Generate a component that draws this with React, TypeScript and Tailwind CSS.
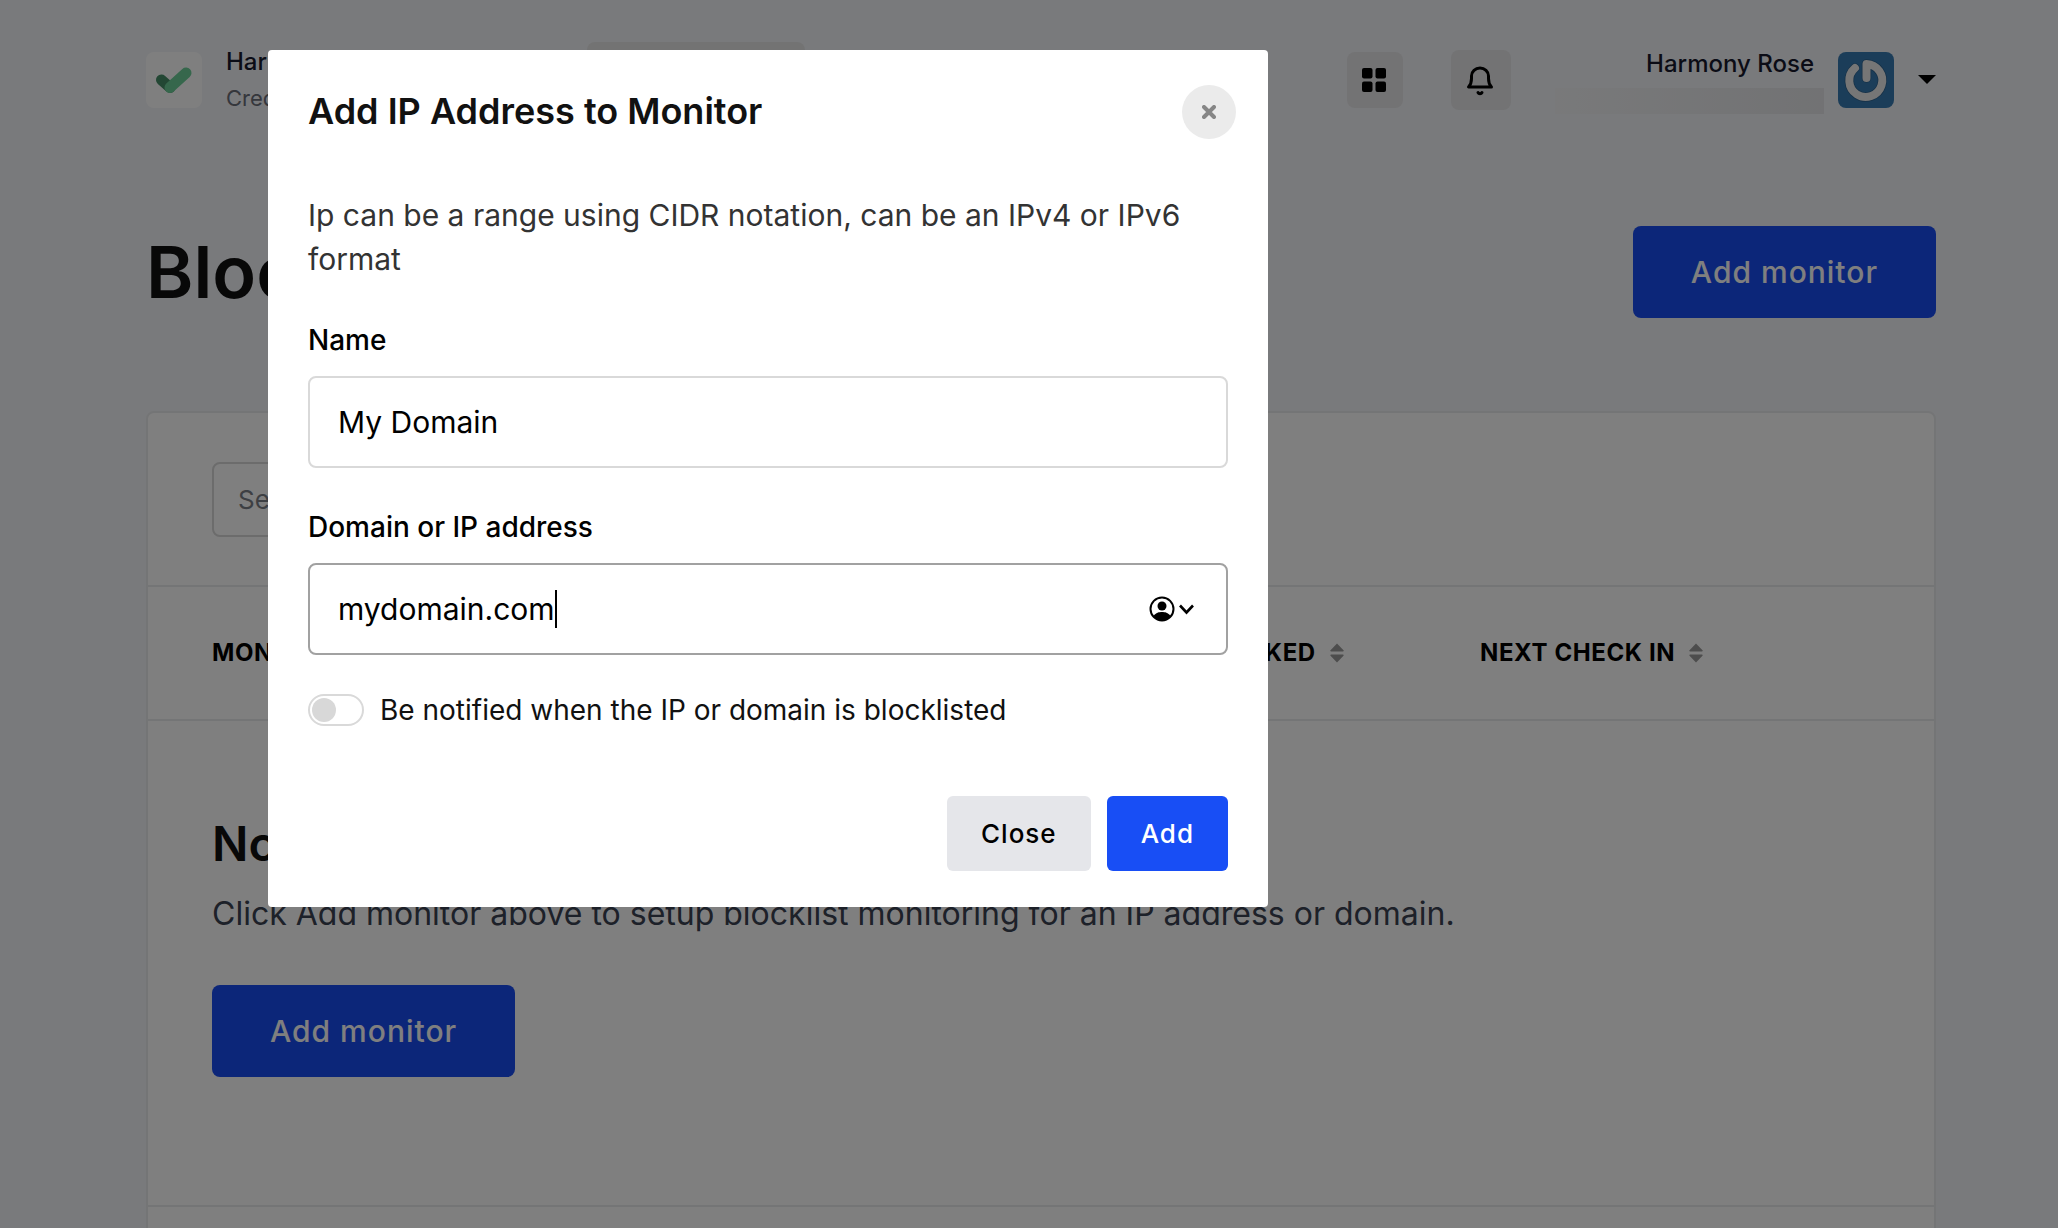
import React from "react";

function SortIcon() {
  return (
    <svg width="14" height="20" viewBox="0 0 14 20" fill="#9b9b9b" aria-hidden="true">
      <path d="M7 0.5 13.5 7.2Q14 8.5 12.8 8.5H1.2Q0 8.5 0.5 7.2Z" />
      <path d="M7 19.5 13.5 12.8Q14 11.5 12.8 11.5H1.2Q0 11.5 0.5 12.8Z" />
    </svg>
  );
}

function HeaderCell({ label, className }: { label: string; className: string }) {
  return (
    <th scope="col" className={`${className} h-[133px] pl-16 text-left text-2xl font-bold tracking-wide text-black`}>
      <span className="flex items-center gap-[14px] whitespace-nowrap">
        {label}
        <SortIcon />
      </span>
    </th>
  );
}

function AddMonitorButton() {
  return (
    <button type="button" className="h-[92px] rounded-lg bg-[#184cf2] px-[58px] text-[30px] font-medium tracking-[1px] text-white">
      Add monitor
    </button>
  );
}

function TopBar() {
  return (
    <header className="flex h-[60px] items-center">
      <div className="h-14 w-14 rounded-lg bg-white">
        <svg width="56" height="56" viewBox="0 0 56 56" fill="none" strokeLinecap="round" strokeLinejoin="round" aria-hidden="true">
          <path d="M15.500 28 24 35.500" stroke="#468f68" strokeWidth="11" />
          <path d="M24 35.500 40 21" stroke="#6ccf98" strokeWidth="11" />
        </svg>
      </div>
      <div className="ml-6 w-[361px] whitespace-nowrap">
        <p className="text-2xl font-medium text-[#16182c]">Harmony Rose</p>
        <p className="mt-1 text-[22px] leading-8 text-[#6b6e78]">Credits</p>
      </div>
      <div className="h-[76px] w-[218px] rounded-lg bg-[#e6e6e7]" />
      <button type="button" aria-label="Apps" className="ml-auto flex h-14 w-14 items-center justify-center rounded-lg bg-[#e6e6e8]">
        <svg width="26" height="24" viewBox="0 0 26 24" fill="#000" aria-hidden="true">
          <rect width="10.5" height="10.5" rx="2" />
          <rect x="13.5" width="10.5" height="10.5" rx="2" />
          <rect y="13.5" width="10.5" height="10.5" rx="2" />
          <rect x="13.5" y="13.5" width="10.5" height="10.5" rx="2" />
        </svg>
      </button>
      <button type="button" aria-label="Notifications" className="ml-12 h-[60px] w-[60px] rounded-lg bg-[#e6e6e8]">
        <svg width="60" height="60" viewBox="0 0 60 60" fill="none" stroke="#000" strokeWidth="3" strokeLinecap="round" strokeLinejoin="round" aria-hidden="true">
          <path d="M17.500 37H40.500C38.500 35 37.500 32 37.500 28.500V26A8.500 8 0 0 0 20.500 26V28.500C20.500 32 19.500 35 17.500 37Z" />
          <path d="M27 42.500A2.200 2 0 0 0 31 42.500" />
        </svg>
      </button>
      <div className="ml-11 flex w-[269px] flex-col pt-[2px]">
        <p className="pr-[10px] text-right text-2xl font-medium text-[#16182c]">Harmony Rose</p>
        <div className="mt-2 h-[26px] bg-linear-to-r from-[#f2f3f5] to-[#e4e5e8]" />
      </div>
      <button type="button" aria-label="Account menu" className="ml-[14px] flex items-center gap-6">
        <svg width="56" height="56" viewBox="0 0 56 56" fill="none" aria-hidden="true">
          <rect width="56" height="56" rx="8" fill="#377bb2" />
          <path d="M17 16A16.500 16.500 0 1 0 28.500 12V26" stroke="#2c6290" strokeWidth="9.500" strokeLinecap="round" strokeLinejoin="round" />
          <path d="M17 16A16.500 16.500 0 1 0 28.500 12V26" stroke="#ececec" strokeWidth="8" strokeLinecap="round" strokeLinejoin="round" />
        </svg>
        <svg width="18" height="10" viewBox="0 0 18 10" aria-hidden="true">
          <path d="M0 0H18L9 9Z" />
        </svg>
      </button>
    </header>
  );
}

function MonitorCard() {
  return (
    <section className="mt-[93px] rounded-lg border-2 border-[#e9eaec] bg-white">
      <div className="flex h-[174px] items-center border-b-2 border-[#e9eaec] pl-16">
        <input
          type="search"
          aria-label="Search"
          placeholder="Search"
          className="h-[75px] w-[500px] rounded-lg border-2 border-[#d8d8d8] px-6 text-[26px] placeholder:text-[#7b7e87]"
        />
      </div>
      <table className="w-full table-fixed border-collapse">
        <thead>
          <tr className="border-b-2 border-[#e9eaec]">
            <HeaderCell label="MONITOR" className="w-[51%]" />
            <HeaderCell label="LAST CHECKED" className="w-[20%]" />
            <HeaderCell label="NEXT CHECK IN" className="w-[29%]" />
          </tr>
        </thead>
        <tbody>
          <tr className="border-b-2 border-[#e9eaec]">
            <td colSpan={3} className="px-16 pt-[87px] pb-32">
              <h2 className="text-5xl leading-[72px] font-semibold text-[#111]">No monitors</h2>
              <p className="mt-2 text-[32px] leading-[52px] text-[#3b4252]">
                Click Add monitor above to setup blocklist monitoring for an IP address or domain.
              </p>
              <div className="mt-[45px]">
                <AddMonitorButton />
              </div>
            </td>
          </tr>
        </tbody>
      </table>
      <div className="h-24" />
    </section>
  );
}

function Field({ id, label, children }: { id: string; label: string; children: React.ReactNode }) {
  return (
    <div className="mt-[39px]">
      <label htmlFor={id} className="block text-[28px] leading-10 font-medium text-black">
        {label}
      </label>
      {children}
    </div>
  );
}

function AddIpDialog() {
  return (
    <div className="fixed inset-0 bg-black/50 pt-[50px] pl-[268px]">
      <div role="dialog" aria-modal="true" aria-labelledby="dialog-title" className="w-full max-w-[1000px] rounded bg-white px-10 pt-[35px] pb-9">
        <div className="-mr-2 flex items-start justify-between">
          <h2 id="dialog-title" className="text-4xl leading-[52px] font-semibold text-[#111]">
            Add IP Address to Monitor
          </h2>
          <button type="button" aria-label="Close dialog" className="flex h-[54px] w-[54px] items-center justify-center rounded-full bg-[#ebebeb]">
            <svg width="14" height="14" viewBox="0 0 14 14" stroke="#868686" strokeWidth="4" strokeLinecap="round" aria-hidden="true">
              <path d="M2 2 12 12M12 2 2 12" />
            </svg>
          </button>
        </div>
        <p className="mt-[54px] text-[30px] leading-[44px] text-[#333]">
          Ip can be a range using CIDR notation, can be an IPv4 or IPv6 format
        </p>
        <form>
          <Field id="name" label="Name">
            <input
              id="name"
              type="text"
              defaultValue="My Domain"
              className="mt-4 h-[92px] w-full rounded-lg border-2 border-[#d9d9d9] px-7 text-[30px] text-black"
            />
          </Field>
          <Field id="domain" label="Domain or IP address">
            <div className="mt-4 flex h-[92px] items-center rounded-lg border-2 border-[#a1a1a1] pr-8 pl-7">
              <input
                id="domain"
                type="text"
                defaultValue="mydomain.com"
                className="field-sizing-content text-[30px] text-black outline-none"
              />
              <span className="h-[38px] w-[2px] bg-black" />
              <svg className="ml-auto" width="46" height="26" viewBox="0 0 46 26" fill="none" aria-hidden="true">
                <circle cx="14" cy="13" r="11.500" stroke="#000" strokeWidth="2" />
                <circle cx="14" cy="10" r="4.500" fill="#000" />
                <path d="M5.500 20C8 16.500 11 16 14 16S20 16.500 22.500 20C20.500 23 17.500 24.500 14 24.500S7.500 23 5.500 20Z" fill="#000" />
                <path d="M32 9.500 38.500 16.500 45 9.500" stroke="#000" strokeWidth="2.600" />
              </svg>
            </div>
          </Field>
          <label className="mt-[34px] flex items-center gap-4 text-[28px] leading-[42px] text-[#111]">
            <input type="checkbox" role="switch" className="peer sr-only" />
            <span className="flex h-8 w-14 items-center rounded-full border-2 border-[#d9d9d9] bg-white px-[2px] peer-checked:justify-end">
              <span className="h-6 w-6 rounded-full bg-[#d8d8d8]" />
            </span>
            Be notified when the IP or domain is blocklisted
          </label>
          <div className="mt-[65px] flex justify-end gap-4">
            <button type="button" className="h-[75px] rounded-md bg-[#e5e6ea] px-[34px] text-[26px] font-medium tracking-[1px] text-black">
              Close
            </button>
            <button type="submit" className="h-[75px] rounded-md bg-[#184ef5] px-[34px] text-[26px] font-medium tracking-[1px] text-white">
              Add
            </button>
          </div>
        </form>
      </div>
    </div>
  );
}

export default function App() {
  return (
    <div className="h-screen overflow-hidden bg-[#f3f4f8] font-['Inter',sans-serif]">
      <main className="pt-[50px] pr-[122px] pl-[146px]">
        <TopBar />
        <div className="mt-[116px] flex items-center justify-between">
          <h1 className="text-7xl font-semibold text-[#111]">Blocklist</h1>
          <AddMonitorButton />
        </div>
        <MonitorCard />
      </main>
      <AddIpDialog />
    </div>
  );
}
